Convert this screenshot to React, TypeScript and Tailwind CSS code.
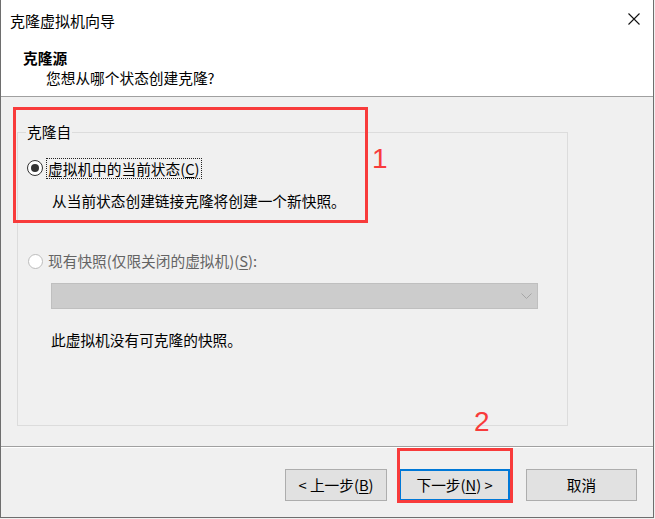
import React from "react";

const F = { fontFamily: '"Noto Sans CJK SC", "Noto Sans", sans-serif' };

export default function App() {
  return (
    <div className="w-[655px] h-[519px] bg-[#f0f0f0] relative overflow-hidden" style={F}>
      <div className="w-[654px] h-[518px] flex flex-col border-l border-r border-b border-[#6e6e6e] bg-[#f0f0f0] text-[14.7px] text-black">
        {/* header */}
        <div className="h-[97px] shrink-0 bg-white border-b border-[#a0a0a0] flex flex-col">
          <div className="h-[42px] flex items-center justify-between pl-[9px] pr-[13px]">
            <span className="leading-[20px] text-[15px]">克隆虚拟机向导</span>
            <svg width="12" height="12" viewBox="0 0 12 12" className="mb-[4px]">
              <path d="M0.5 0.5 L11.5 11.5 M11.5 0.5 L0.5 11.5" stroke="#111" strokeWidth="1.1" />
            </svg>
          </div>
          <div className="mt-[6px] h-[20px] leading-[20px] pl-[22px] font-bold">克隆源</div>
          <div className="h-[20px] leading-[20px] pl-[45px]">您想从哪个状态创建克隆?</div>
        </div>

        {/* body */}
        <div className="h-[350px] shrink-0 border-b border-[#a0a0a0] pt-[35px] pl-[16px]">
          <div className="relative w-[551px] h-[294px] border border-[#dcdcdc] flex flex-col">
            <span className="absolute left-[8px] top-[-11px] h-[20px] leading-[20px] px-[1px] bg-[#f0f0f0]">克隆自</span>

            <div className="mt-[24px] h-[22px] flex items-center pl-[9px]">
              <span className="w-[16px] h-[16px] rounded-full border border-[#333] bg-white flex items-center justify-center">
                <span className="w-[8px] h-[8px] rounded-full bg-[#333]" />
              </span>
              <span className="ml-[3px] h-[21px] leading-[19px] px-[1px] border border-dotted border-[#222]">
                虚拟机中的当前状态(<span className="underline underline-offset-2">C</span>)
              </span>
            </div>
            <div className="mt-[12px] h-[20px] leading-[20px] pl-[34px]">从当前状态创建链接克隆将创建一个新快照。</div>

            <div className="mt-[39px] h-[22px] flex items-center pl-[10px] text-[#646464]">
              <span className="w-[15px] h-[15px] rounded-full border border-[#bcbcbc] bg-white" />
              <span className="ml-[5px] leading-[20px]">
                现有快照(仅限关闭的虚拟机)(<span className="underline underline-offset-2">S</span>):
              </span>
            </div>
            <div className="mt-[11px] ml-[33px] w-[487px] h-[26px] bg-[#cccccc] border border-[#bfbfbf] flex items-center justify-end pr-[5px]">
              <svg width="11" height="6" viewBox="0 0 11 6">
                <path d="M0.5 0.5 L5.5 5.5 L10.5 0.5" fill="none" stroke="#a6a6a6" strokeWidth="1" />
              </svg>
            </div>
            <div className="mt-[21px] h-[20px] leading-[20px] pl-[33px]">此虚拟机没有可克隆的快照。</div>
          </div>
        </div>

        {/* footer */}
        <div className="flex-1 border-t border-white pt-[21px] pl-[284px] flex items-start">
          <button className="w-[102px] h-[32px] bg-[#e1e1e1] border border-[#adadad] leading-[20px]">
            &lt; 上一步(<span className="underline underline-offset-2">B</span>)
          </button>
          <button className="ml-[12px] w-[111px] h-[32px] bg-[#e1e1e1] border-2 border-[#0078d7] leading-[20px]">
            下一步(<span className="underline underline-offset-2">N</span>) &gt;
          </button>
          <button className="ml-[16px] w-[111px] h-[32px] bg-[#e1e1e1] border border-[#adadad] leading-[20px]">
            取消
          </button>
        </div>
      </div>

      {/* annotations */}
      <div className="absolute left-[13px] top-[107px] w-[355px] h-[116px] border-[3px] border-[#f83b3b]" />
      <div
        className="absolute left-[372px] top-[143px] text-[28px] leading-[32px] text-[#f83b3b]"
        style={{ fontFamily: '"Liberation Sans", sans-serif' }}
      >
        1
      </div>
      <div className="absolute left-[397px] top-[448px] w-[116px] h-[55px] border-[3px] border-[#f83b3b]" />
      <div
        className="absolute left-[474px] top-[406px] text-[28px] leading-[32px] text-[#f83b3b]"
        style={{ fontFamily: '"Liberation Sans", sans-serif' }}
      >
        2
      </div>
    </div>
  );
}
